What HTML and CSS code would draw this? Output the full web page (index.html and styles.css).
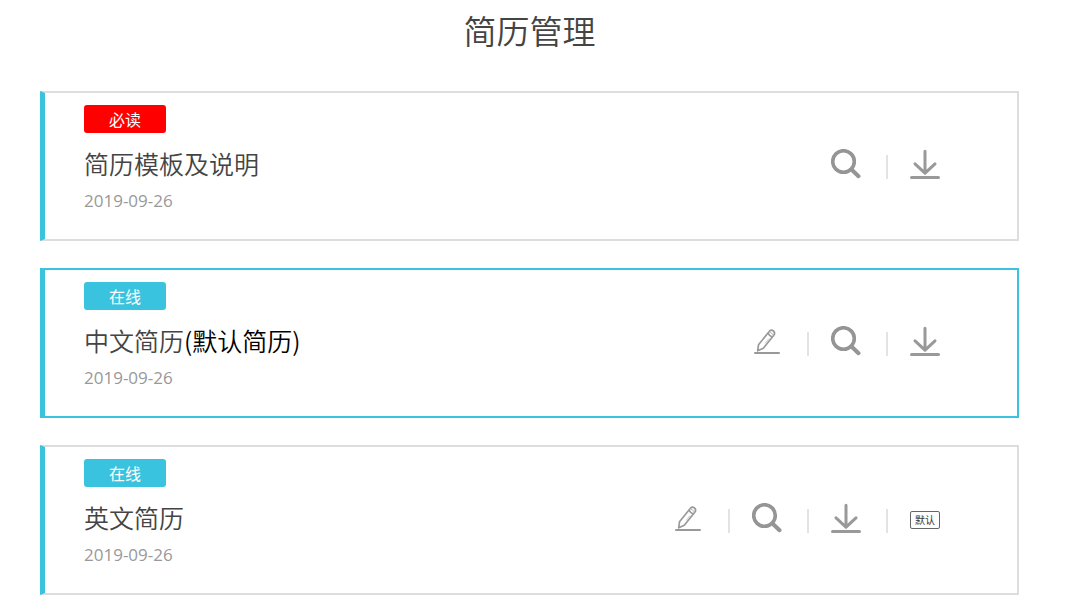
FILE: index.html
```html
<!DOCTYPE html>
<html lang="zh-CN">
<head>
    <meta charset="UTF-8">
    <meta name="viewport" content="width=device-width, initial-scale=1.0">
    <title>简历管理</title>
    <link rel="stylesheet" href="styles.css">
</head>
<body>
    <!-- 图标 -->
    <svg class="sprite" aria-hidden="true">
        <symbol id="icon-edit" viewBox="0 0 30 30">
            <path d="M5.7 24.8 L6.5 18.8 L17.4 5.3 C18.7 3.8 20.2 4 21.4 5 C22.8 6.2 23 7.6 21.8 9.2 L11.3 22.2 Z M16 7.2 C17.2 9.6 18.3 10.4 20.2 11" fill="none" stroke="#999" stroke-width="1.7" stroke-linejoin="round"/>
            <path d="M17.4 5.3 L21.8 9.2" fill="none" stroke="#aaa" stroke-width="1"/>
            <path d="M17 12.5 L13 17.5" fill="none" stroke="#ccc" stroke-width="1"/>
            <path d="M3 27 H27" stroke="#999" stroke-width="2" stroke-linecap="round"/>
        </symbol>
        <symbol id="icon-search" viewBox="0 0 30 30">
            <circle cx="12.5" cy="12.5" r="10.8" fill="none" stroke="#959595" stroke-width="3.6"/>
            <path d="M20.5 20.5 L27.5 27.2" stroke="#959595" stroke-width="4" stroke-linecap="round"/>
        </symbol>
        <symbol id="icon-download" viewBox="0 0 30 30">
            <path d="M15 2.2 V24 M5 14.8 L15 24.2 L25 14.8" fill="none" stroke="#999" stroke-width="3" stroke-linecap="round"/>
            <path d="M1.5 28.4 H28.5" stroke="#999" stroke-width="3" stroke-linecap="round"/>
        </symbol>
    </svg>

    <h1>简历管理</h1>

    <ul class="resume-list">
        <li class="resume">
            <div class="info">
                <span class="tag tag-red">必读</span>
                <h2>简历模板及说明</h2>
                <p class="date">2019-09-26</p>
            </div>
            <div class="actions">
                <a href="#" aria-label="查看"><svg><use href="#icon-search"/></svg></a>
                <a href="#" aria-label="下载"><svg><use href="#icon-download"/></svg></a>
            </div>
        </li>
        <li class="resume active">
            <div class="info">
                <span class="tag">在线</span>
                <h2>中文简历<span class="default">(默认简历)</span></h2>
                <p class="date">2019-09-26</p>
            </div>
            <div class="actions">
                <a href="#" aria-label="编辑"><svg><use href="#icon-edit"/></svg></a>
                <a href="#" aria-label="查看"><svg><use href="#icon-search"/></svg></a>
                <a href="#" aria-label="下载"><svg><use href="#icon-download"/></svg></a>
            </div>
        </li>
        <li class="resume">
            <div class="info">
                <span class="tag">在线</span>
                <h2>英文简历</h2>
                <p class="date">2019-09-26</p>
            </div>
            <div class="actions">
                <a href="#" aria-label="编辑"><svg><use href="#icon-edit"/></svg></a>
                <a href="#" aria-label="查看"><svg><use href="#icon-search"/></svg></a>
                <a href="#" aria-label="下载"><svg><use href="#icon-download"/></svg></a>
                <a href="#"><span class="set-default">默认</span></a>
            </div>
        </li>
    </ul>
</body>
</html>
```
FILE: styles.css
```css
body {
    margin: 0;
    padding: 0 61px 0 40px;
    background-color: white;
    font-family: "Noto Sans CJK SC", sans-serif;
    color: #444;
}

h1, h2, p, ul {
    margin: 0;
    padding: 0;
}

h1, h2 {
    font-weight: 350;
}

h1 {
    margin-bottom: 31px;
    font-size: 33px;
    line-height: 60px;
    text-align: center;
}

.sprite {
    display: none;
}

.resume-list {
    display: flex;
    flex-direction: column;
    gap: 27px;
    list-style: none;
}

.resume {
    display: flex;
    justify-content: space-between;
    align-items: center;
    padding: 12px 77px 22px 39px;
    border: 2px solid #ddd;
    border-left: 5px solid #3ac3de;
}

.resume.active {
    border-color: #3ac3de;
}

/* 标签 */
.tag {
    display: block;
    width: 82px;
    border-radius: 3px;
    background-color: #3ac3de;
    color: white;
    font-size: 16px;
    line-height: 28px;
    text-align: center;
}

.tag-red {
    background-color: #f00;
}

h2 {
    margin-top: 12px;
    font-size: 25px;
    line-height: 36px;
}

.default {
    color: black;
}

.date {
    margin-top: 4px;
    color: #999;
    font-family: "Open Sans", "Noto Sans", sans-serif;
    font-size: 17px;
    line-height: 32px;
}

/* 操作按钮 */
.actions {
    display: flex;
    align-items: center;
    padding-top: 6px;
}

.actions a {
    display: flex;
    align-items: center;
    justify-content: center;
    width: 30px;
    height: 30px;
    text-decoration: none;
}

.actions a + a::before {
    content: "";
    flex: none;
    width: 2px;
    height: 24px;
    margin: 6px 22px 0 25px;
    background-color: #e3e3e3;
}

.actions a + a {
    width: 79px;
}

.actions svg {
    flex: none;
    width: 30px;
    height: 30px;
}

.set-default {
    flex: none;
    box-sizing: border-box;
    width: 30px;
    margin-top: 3px;
    border: 1px solid #666;
    border-radius: 2px;
    color: #333;
    font-size: 10px;
    line-height: 16px;
    text-align: center;
}
```
